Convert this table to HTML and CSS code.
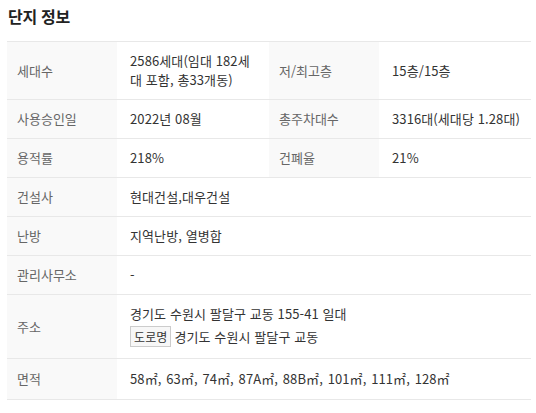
FILE: index.html
```html
<!DOCTYPE html>
<html lang="ko">
<head>
<meta charset="utf-8">
<link rel="stylesheet" href="styles.css">
</head>
<body>
<section class="complex">
  <h2 class="title">단지 정보</h2>
  <div class="info">
    <div class="row">
      <div class="label">세대수</div>
      <div class="value half">2586세대(임대 182세대 포함, 총33개동)</div>
      <div class="label">저/최고층</div>
      <div class="value">15층/15층</div>
    </div>
    <div class="row">
      <div class="label">사용승인일</div>
      <div class="value half">2022년 08월</div>
      <div class="label">총주차대수</div>
      <div class="value">3316대(세대당 1.28대)</div>
    </div>
    <div class="row">
      <div class="label">용적률</div>
      <div class="value half">218%</div>
      <div class="label">건폐율</div>
      <div class="value">21%</div>
    </div>
    <div class="row">
      <div class="label">건설사</div>
      <div class="value wide">현대건설,대우건설</div>
    </div>
    <div class="row">
      <div class="label">난방</div>
      <div class="value wide">지역난방, 열병합</div>
    </div>
    <div class="row">
      <div class="label">관리사무소</div>
      <div class="value wide">-</div>
    </div>
    <div class="row">
      <div class="label">주소</div>
      <div class="value wide address">
        <div class="addr">경기도 수원시 팔달구 교동 155-41 일대</div>
        <div class="addr road"><span class="badge">도로명</span> 경기도 수원시 팔달구 교동</div>
      </div>
    </div>
    <div class="row last">
      <div class="label">면적</div>
      <div class="value wide area">58㎡, 63㎡, 74㎡, 87A㎡, 88B㎡, 101㎡, 111㎡, 128㎡</div>
    </div>
  </div>
</section>
</body>
</html>
```

FILE: styles.css
```css
html, body {
  margin: 0;
  padding: 0;
  background: #fff;
}
body {
  font-family: "Noto Sans CJK KR", "Noto Sans", sans-serif;
  color: #333;
}
.complex {
  padding: 0 5px 0 7px;
}
.title {
  margin: 0;
  padding: 5px 0 0 1px;
  height: 41px;
  box-sizing: border-box;
  font-size: 16px;
  line-height: 22px;
  font-weight: 700;
  color: #222;
  letter-spacing: -0.3px;
}
.info {
  width: 524px;
  border-top: 1px solid #e8e8e8;
  font-size: 13px;
  line-height: 19px;
}
.row {
  display: grid;
  grid-template-columns: 110px 152px 110px 1fr;
  border-bottom: 1px solid #e8e8e8;
}
.label {
  background: #f9f9f9;
  color: #666;
  padding: 9px 10px 10px;
  display: flex;
  align-items: center;
}
.value {
  padding: 9px 10px 10px 13px;
  display: flex;
  align-items: center;
  color: #333;
  letter-spacing: 0.1px;
}
.value.wide {
  grid-column: 2 / 5;
  flex-direction: column;
  align-items: flex-start;
  justify-content: center;
}
.value.address {
  padding-top: 9px;
  padding-bottom: 11px;
}
.addr.road {
  margin-top: 3px;
  display: flex;
  align-items: center;
  gap: 3px;
}
.badge {
  display: inline-block;
  border: 1px solid #ccc;
  background: #f7f7f7;
  font-size: 12px;
  line-height: 19px;
  padding: 0 3px;
  color: #333;
}
.area {
  padding-top: 10px;
  padding-bottom: 11px;
  word-spacing: 1px;
}
```
